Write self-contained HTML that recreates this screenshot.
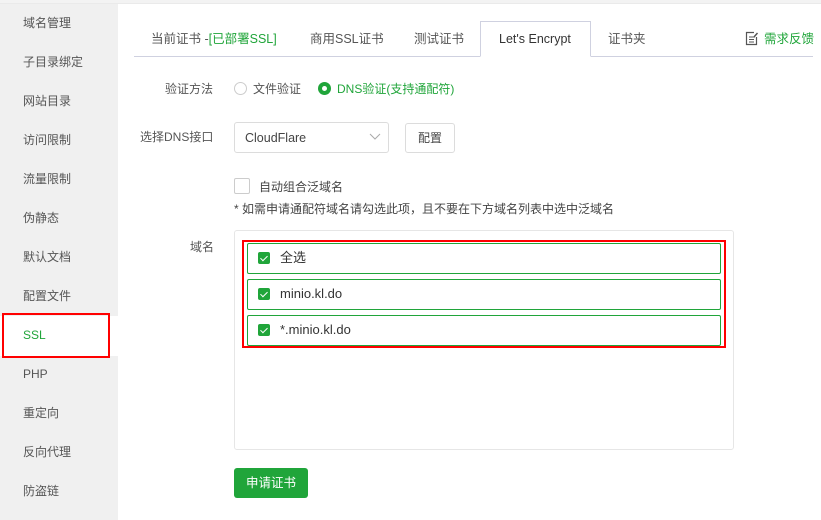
<!DOCTYPE html>
<html><head><meta charset="utf-8"><style>
*{margin:0;padding:0;box-sizing:border-box}
body{width:821px;height:520px;background:#fff;font-family:"Liberation Sans","Noto Sans CJK SC",sans-serif;font-size:12px;color:#555;position:relative;overflow:hidden;line-height:16px}
div{line-height:16px}
.top{position:absolute;left:0;top:0;width:821px;height:4px;background:#f3f3f3;border-bottom:1px solid #eaeaea}
.side{position:absolute;left:0;top:4px;width:118px;height:516px;background:#f0f0f0}
.si{position:absolute;left:23px;font-size:12px;color:#555}
.ssl{position:absolute;left:0;top:316px;width:118px;height:40px;background:#fff}
.redside{position:absolute;left:2px;top:313px;width:108px;height:45px;border:2px solid #f00}
.a{position:absolute;white-space:nowrap}
.tabline{position:absolute;left:134px;top:56px;width:679px;height:1px;background:#cfd1e0}
.tab{position:absolute;top:31px;font-size:12.5px;color:#555;height:16px;white-space:nowrap}
.act{position:absolute;left:480px;top:21px;width:111px;height:36px;border:1px solid #cfd1e0;border-bottom:1px solid #fff;background:#fff}
.g{color:#20a53a}
.box{position:absolute;border:1px solid #dcdcdc;border-radius:3px;background:#fff}
.row{position:absolute;left:247px;width:474px;height:31px;border:1px solid #20a53a;border-radius:2px}
.cb{position:absolute;left:10px;top:8px;width:12px;height:12px;background:#20a53a;border-radius:2px}
.cb:after{content:"";position:absolute;left:4px;top:2px;width:3px;height:6px;border:solid #fff;border-width:0 1.3px 1.3px 0;transform:rotate(45deg)}
.rt{position:absolute;left:32px;top:6px;font-size:13px;color:#333;height:16px;white-space:nowrap}
</style></head><body>
<div class="top"></div>
<div class="side"></div>
<div class="ssl"></div>
<div class="si" style="top:15px">域名管理</div>
<div class="si" style="top:54px">子目录绑定</div>
<div class="si" style="top:93px">网站目录</div>
<div class="si" style="top:132px">访问限制</div>
<div class="si" style="top:171px">流量限制</div>
<div class="si" style="top:210px">伪静态</div>
<div class="si" style="top:249px">默认文档</div>
<div class="si" style="top:288px">配置文件</div>
<div class="si g" style="top:327px">SSL</div>
<div class="si" style="top:366px">PHP</div>
<div class="si" style="top:405px">重定向</div>
<div class="si" style="top:444px">反向代理</div>
<div class="si" style="top:483px">防盗链</div>
<div class="redside"></div>

<div class="tabline"></div>
<div class="act"></div>
<div class="tab" style="left:151px">当前证书 -<span class="g">[已部署SSL]</span></div>
<div class="tab" style="left:310px">商用SSL证书</div>
<div class="tab" style="left:414px">测试证书</div>
<div class="tab" style="left:499px;color:#333">Let's Encrypt</div>
<div class="tab" style="left:608px">证书夹</div>
<svg class="a" style="left:745px;top:31px" width="14" height="15" viewBox="0 0 14 15"><path d="M9 1.5H1.5v12h10V6" fill="none" stroke="#555" stroke-width="1.2"/><path d="M4 6h4M4 8.5h5M4 11h5" stroke="#555" stroke-width="1"/><path d="M8.5 6.5l4-4.5" stroke="#555" stroke-width="1.5"/></svg>
<div class="tab g" style="left:764px">需求反馈</div>

<div class="a" style="left:165px;top:81px;color:#555">验证方法</div>
<div class="a" style="left:234px;top:82px;width:13px;height:13px;border:1px solid #ccc;border-radius:50%"></div>
<div class="a" style="left:253px;top:81px">文件验证</div>
<div class="a" style="left:318px;top:82px;width:13px;height:13px;background:#20a53a;border-radius:50%"><div style="position:absolute;left:4px;top:4px;width:5px;height:5px;background:#fff;border-radius:50%"></div></div>
<div class="a g" style="left:337px;top:81px">DNS验证(支持通配符)</div>

<div class="a" style="left:140px;top:129px">选择DNS接口</div>
<div class="box" style="left:234px;top:122px;width:155px;height:31px"></div>
<div class="a" style="left:245px;top:130px;font-size:12.5px;color:#444">CloudFlare</div>
<svg class="a" style="left:369px;top:133px" width="12" height="8"><path d="M1 1l5 5 5-5" fill="none" stroke="#aaa" stroke-width="1"/></svg>
<div class="box" style="left:405px;top:123px;width:50px;height:30px"></div>
<div class="a" style="left:418px;top:130px;color:#444">配置</div>

<div class="a" style="left:234px;top:178px;width:16px;height:16px;border:1px solid #ccc;border-radius:2px"></div>
<div class="a" style="left:259px;top:179px;color:#444">自动组合泛域名</div>
<div class="a" style="left:234px;top:201px;color:#444">* 如需申请通配符域名请勾选此项，且不要在下方域名列表中选中泛域名</div>

<div class="a" style="left:190px;top:239px">域名</div>
<div class="box" style="left:234px;top:230px;width:500px;height:220px;border-color:#e6e6e6"></div>
<div class="a" style="left:242px;top:240px;width:484px;height:108px;border:2px solid #f00"></div>
<div class="row" style="top:243px"><div class="cb"></div><div class="rt">全选</div></div>
<div class="row" style="top:279px"><div class="cb"></div><div class="rt">minio.kl.do</div></div>
<div class="row" style="top:315px"><div class="cb"></div><div class="rt">*.minio.kl.do</div></div>

<div class="a" style="left:234px;top:468px;width:74px;height:30px;background:#20a53a;border-radius:3px;color:#fff;text-align:center;line-height:30px;font-size:12.5px">申请证书</div>
</body></html>
